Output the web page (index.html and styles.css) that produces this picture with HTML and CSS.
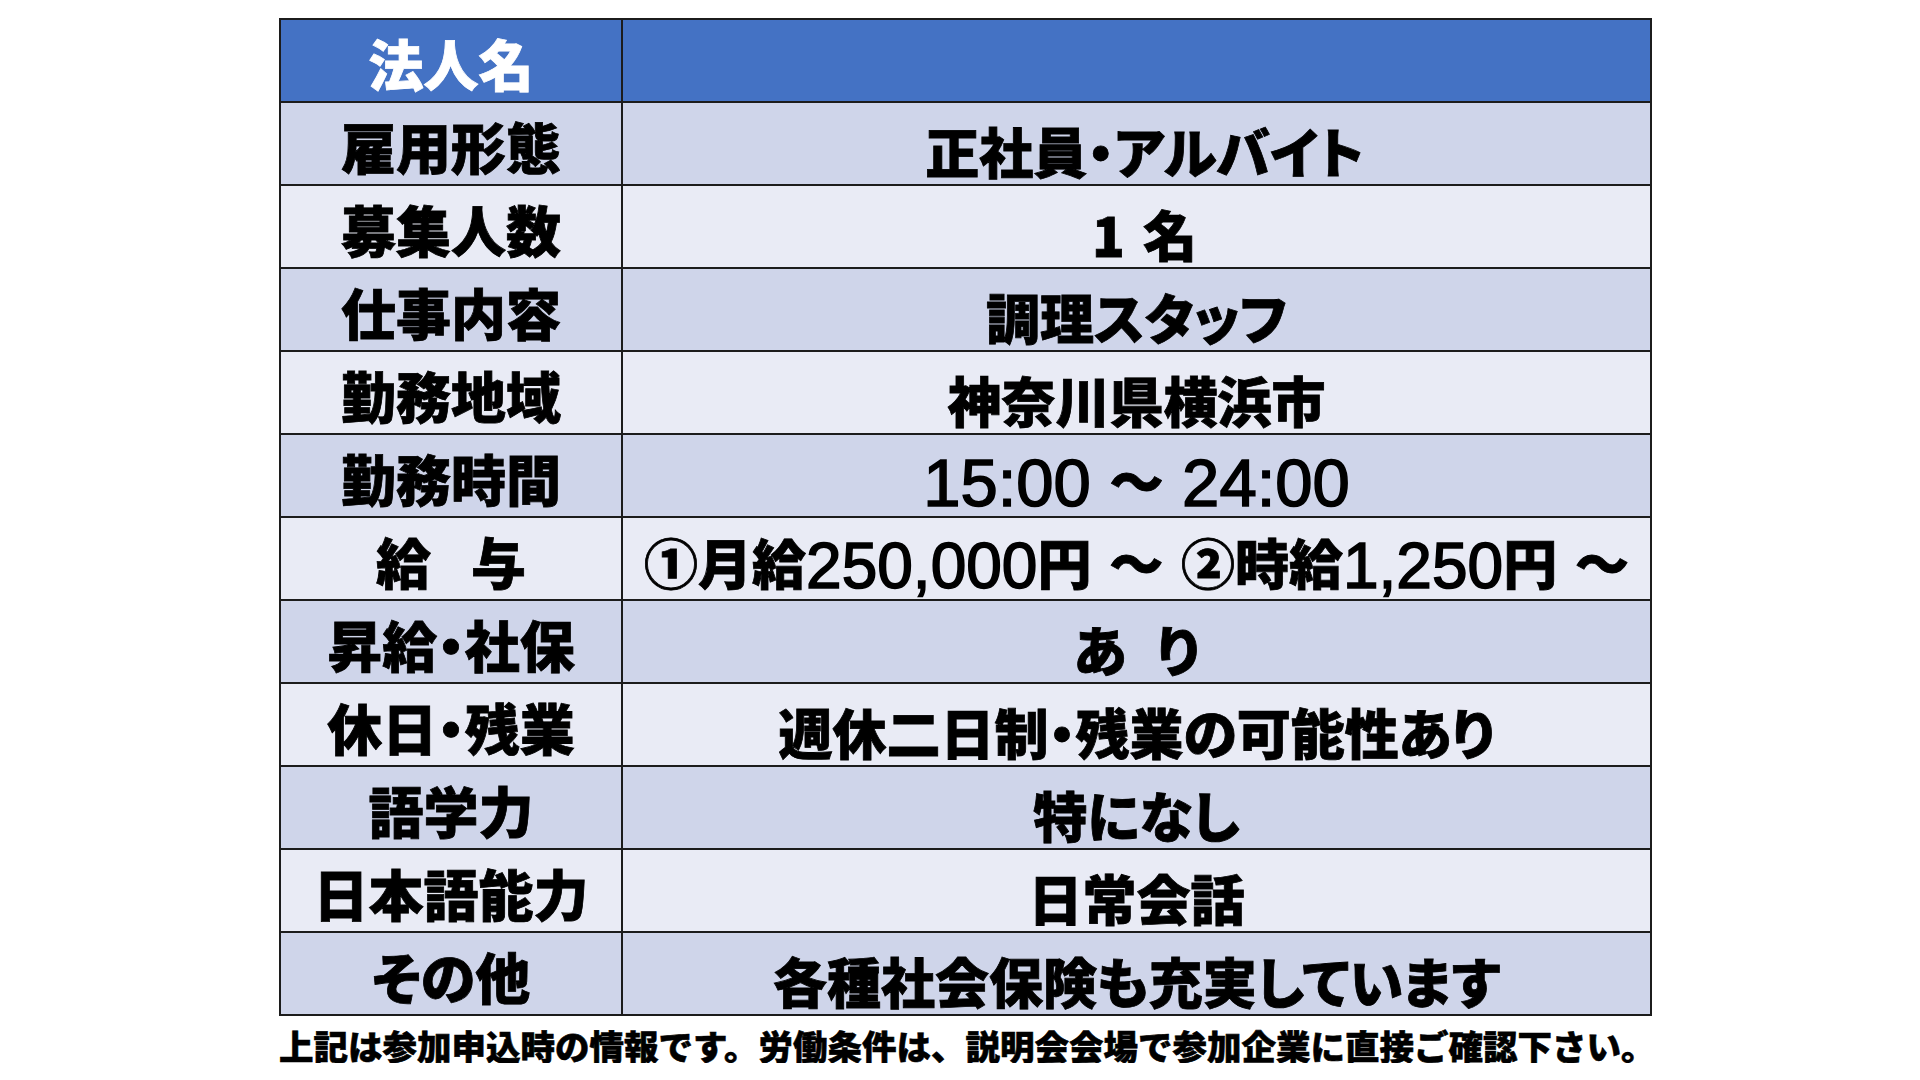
FILE: index.html
```html
<!DOCTYPE html>
<html lang="ja">
<head>
<meta charset="utf-8">
<title>求人情報</title>
<link rel="stylesheet" href="styles.css">
</head>
<body>
<div class="page">
  <div class="sheet">
    <div class="cell label head"><span>法人名</span></div>
    <div class="cell value head"><span></span></div>

    <div class="cell label dark"><span>雇用形態</span></div>
    <div class="cell value dark"><span class="shift">正社員・アルバイト</span></div>

    <div class="cell label light"><span>募集人数</span></div>
    <div class="cell value light"><span class="shift">1<span class="gap one"></span>名</span></div>

    <div class="cell label dark"><span>仕事内容</span></div>
    <div class="cell value dark"><span>調理スタッフ</span></div>

    <div class="cell label light"><span>勤務地域</span></div>
    <div class="cell value light"><span>神奈川県横浜市</span></div>

    <div class="cell label dark"><span>勤務時間</span></div>
    <div class="cell value dark"><span><span class="num time">15:00 </span>～<span class="num time"> 24:00</span></span></div>

    <div class="cell label light"><span>給<span class="gap kyu"></span>与</span></div>
    <div class="cell value light"><span>①月給<span class="num pay">250,000</span>円<span class="num pay"> </span>～<span class="num pay"> </span>②時給<span class="num pay">1,250</span>円<span class="num pay"> </span>～</span></div>

    <div class="cell label dark"><span>昇給・社保</span></div>
    <div class="cell value dark"><span>あ<span class="gap ari"></span>り</span></div>

    <div class="cell label light"><span>休日・残業</span></div>
    <div class="cell value light"><span>週休二日制・残業の可能性あり</span></div>

    <div class="cell label dark"><span>語学力</span></div>
    <div class="cell value dark"><span>特になし</span></div>

    <div class="cell label light"><span>日本語能力</span></div>
    <div class="cell value light"><span>日常会話</span></div>

    <div class="cell label dark"><span>その他</span></div>
    <div class="cell value dark"><span>各種社会保険も充実しています</span></div>
  </div>
  <p class="note">上記は参加申込時の情報です。労働条件は、説明会会場で参加企業に直接ご確認下さい。</p>
</div>
</body>
</html>
```

FILE: styles.css
```css
html, body {
  margin: 0;
  padding: 0;
  background: #ffffff;
}

.page {
  padding: 18px 0 0 279px;
}

.sheet {
  display: grid;
  grid-template-columns: 340px 1027px;
  grid-auto-rows: 81px;
  gap: 2px;
  padding: 2px;
  width: max-content;
  background: #1c1c1c;
  font-family: "Noto Sans CJK JP", "Noto Sans CJK SC", sans-serif;
  font-weight: 900;
  color: #000000;
}

.cell {
  display: flex;
  align-items: center;
  justify-content: center;
  line-height: 1;
  white-space: pre;
  box-sizing: border-box;
  font-feature-settings: "palt";
  -webkit-text-stroke: 0.8px currentColor;
}

.label {
  font-size: 55px;
  padding-top: 4px;
}

.value {
  font-size: 54px;
  padding-top: 14px;
}

.shift {
  margin-left: 16px;
}

.head {
  background: #4472c4;
  color: #ffffff;
}

.dark {
  background: #cfd5ea;
}

.light {
  background: #e9ebf5;
}

.num {
  font-family: "Liberation Sans", Arial, sans-serif;
  font-weight: 400;
  -webkit-text-stroke: 1.6px #000000;
  vertical-align: -0.04em;
}

.time {
  font-size: 67px;
}

.pay {
  font-size: 64px;
}

.gap {
  display: inline-block;
}

.gap.one {
  width: 18px;
}

.gap.kyu {
  width: 40px;
}

.gap.ari {
  width: 30px;
}

.note {
  margin: 12px 0 0 0;
  font-family: "Noto Sans CJK JP", "Noto Sans CJK SC", sans-serif;
  font-weight: 900;
  font-size: 34.5px;
  line-height: 1;
  color: #000000;
  white-space: nowrap;
  -webkit-text-stroke: 0.6px #000000;
}
```
